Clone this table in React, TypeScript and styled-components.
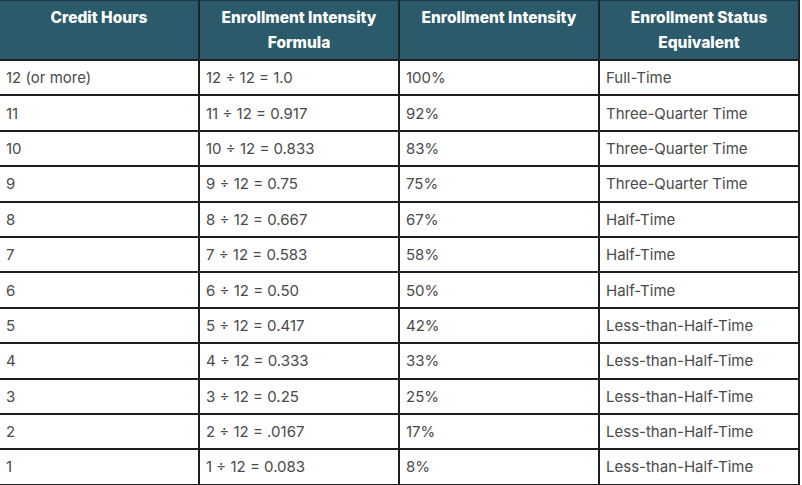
import React from "react";
import styled, { createGlobalStyle } from "styled-components";

const Global = createGlobalStyle`
  html, body { margin: 0; padding: 0; background: #ffffff; }
  body { font-family: Inter, "Liberation Sans", Arial, sans-serif; }
`;

const Grid = styled.div`
  display: grid;
  grid-template-columns: repeat(4, 200px);
  grid-template-rows: 61px repeat(12, 35.4px);
  width: 800px;
`;

const HeadCell = styled.div`
  box-sizing: border-box;
  background: #2b5b6b;
  color: #ffffff;
  font-weight: 800;
  font-size: 15.5px;
  line-height: 25px;
  text-align: center;
  display: flex;
  align-items: flex-start;
  justify-content: center;
  padding: 4px 10px 0;
  border-right: 2px solid #1e2326;
  border-bottom: 2px solid #1e2326;
  border-top: 1px solid #1e3a44;
`;

const Cell = styled.div`
  box-sizing: border-box;
  color: #4a4a4a;
  font-size: 15px;
  display: flex;
  align-items: center;
  padding: 0 6px 0 6px;
  border-right: 2px solid #1e1e1e;
  border-bottom: 2px solid #1e1e1e;
  white-space: nowrap;
`;

const headers = [
  ["Credit Hours"],
  ["Enrollment Intensity", "Formula"],
  ["Enrollment Intensity"],
  ["Enrollment Status", "Equivalent"],
];

const rows: [string, string, string, string][] = [
  ["12 (or more)", "12 ÷ 12 = 1.0", "100%", "Full-Time"],
  ["11", "11 ÷ 12 = 0.917", "92%", "Three-Quarter Time"],
  ["10", "10 ÷ 12 = 0.833", "83%", "Three-Quarter Time"],
  ["9", "9 ÷ 12 = 0.75", "75%", "Three-Quarter Time"],
  ["8", "8 ÷ 12 = 0.667", "67%", "Half-Time"],
  ["7", "7 ÷ 12 = 0.583", "58%", "Half-Time"],
  ["6", "6 ÷ 12 = 0.50", "50%", "Half-Time"],
  ["5", "5 ÷ 12 = 0.417", "42%", "Less-than-Half-Time"],
  ["4", "4 ÷ 12 = 0.333", "33%", "Less-than-Half-Time"],
  ["3", "3 ÷ 12 = 0.25", "25%", "Less-than-Half-Time"],
  ["2", "2 ÷ 12 = .0167", "17%", "Less-than-Half-Time"],
  ["1", "1 ÷ 12 = 0.083", "8%", "Less-than-Half-Time"],
];

export default function App() {
  return (
    <>
      <Global />
      <Grid>
        {headers.map((h, i) => (
          <HeadCell key={"h" + i}>
            <span>
              {h.map((line, j) => (
                <React.Fragment key={j}>
                  {j > 0 && <br />}
                  {line}
                </React.Fragment>
              ))}
            </span>
          </HeadCell>
        ))}
        {rows.map((r, i) =>
          r.map((c, j) => <Cell key={i + "-" + j}>{c}</Cell>)
        )}
      </Grid>
    </>
  );
}
